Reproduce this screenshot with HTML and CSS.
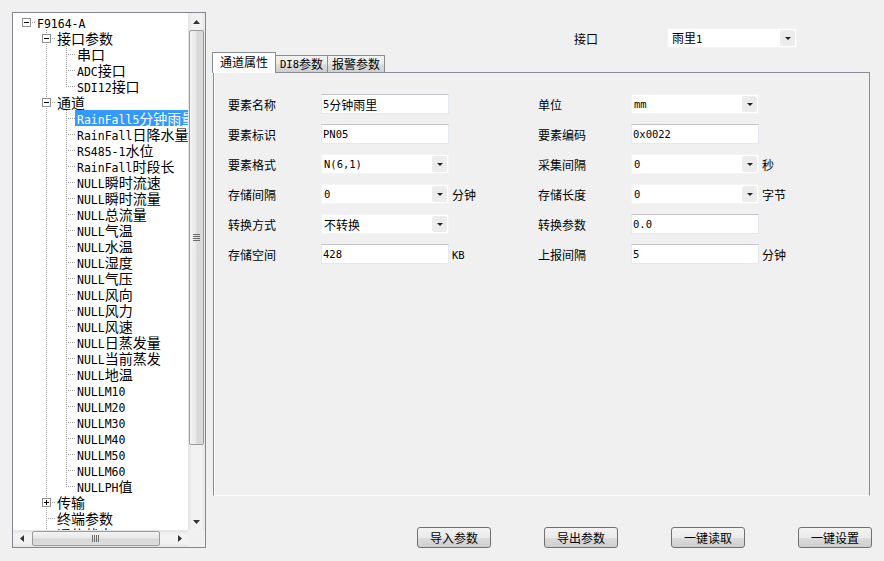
FILE: index.html
```html
<!DOCTYPE html>
<html>
<head>
    <title>F9164-A 参数设置</title>
    <meta charset="utf-8">
    <link rel="stylesheet" href="styles.css">
</head>
<body>
<div class="app">

    <aside class="tree">
        <div class="tree-body">
            <div class="tree-list">
                <div class="row"><span class="c h"><b class="box"></b></span><span class="txt"><span class="m">F9164-A</span></span></div>
                <div class="row"><span class="c"></span><span class="c t"><b class="box"></b></span><span class="txt">接口参数</span></div>
                <div class="row"><span class="c"></span><span class="c v"></span><span class="c t"></span><span class="txt">串口</span></div>
                <div class="row"><span class="c"></span><span class="c v"></span><span class="c t"></span><span class="txt"><span class="m">ADC</span>接口</span></div>
                <div class="row"><span class="c"></span><span class="c v"></span><span class="c l"></span><span class="txt"><span class="m">SDI12</span>接口</span></div>
                <div class="row"><span class="c"></span><span class="c t"><b class="box"></b></span><span class="txt">通道</span></div>
                <div class="row"><span class="c"></span><span class="c v"></span><span class="c t"></span><span class="txt sel"><span class="m">RainFall5</span>分钟雨量</span></div>
                <div class="row"><span class="c"></span><span class="c v"></span><span class="c t"></span><span class="txt"><span class="m">RainFall</span>日降水量</span></div>
                <div class="row"><span class="c"></span><span class="c v"></span><span class="c t"></span><span class="txt"><span class="m">RS485-1</span>水位</span></div>
                <div class="row"><span class="c"></span><span class="c v"></span><span class="c t"></span><span class="txt"><span class="m">RainFall</span>时段长</span></div>
                <div class="row"><span class="c"></span><span class="c v"></span><span class="c t"></span><span class="txt"><span class="m">NULL</span>瞬时流速</span></div>
                <div class="row"><span class="c"></span><span class="c v"></span><span class="c t"></span><span class="txt"><span class="m">NULL</span>瞬时流量</span></div>
                <div class="row"><span class="c"></span><span class="c v"></span><span class="c t"></span><span class="txt"><span class="m">NULL</span>总流量</span></div>
                <div class="row"><span class="c"></span><span class="c v"></span><span class="c t"></span><span class="txt"><span class="m">NULL</span>气温</span></div>
                <div class="row"><span class="c"></span><span class="c v"></span><span class="c t"></span><span class="txt"><span class="m">NULL</span>水温</span></div>
                <div class="row"><span class="c"></span><span class="c v"></span><span class="c t"></span><span class="txt"><span class="m">NULL</span>湿度</span></div>
                <div class="row"><span class="c"></span><span class="c v"></span><span class="c t"></span><span class="txt"><span class="m">NULL</span>气压</span></div>
                <div class="row"><span class="c"></span><span class="c v"></span><span class="c t"></span><span class="txt"><span class="m">NULL</span>风向</span></div>
                <div class="row"><span class="c"></span><span class="c v"></span><span class="c t"></span><span class="txt"><span class="m">NULL</span>风力</span></div>
                <div class="row"><span class="c"></span><span class="c v"></span><span class="c t"></span><span class="txt"><span class="m">NULL</span>风速</span></div>
                <div class="row"><span class="c"></span><span class="c v"></span><span class="c t"></span><span class="txt"><span class="m">NULL</span>日蒸发量</span></div>
                <div class="row"><span class="c"></span><span class="c v"></span><span class="c t"></span><span class="txt"><span class="m">NULL</span>当前蒸发</span></div>
                <div class="row"><span class="c"></span><span class="c v"></span><span class="c t"></span><span class="txt"><span class="m">NULL</span>地温</span></div>
                <div class="row"><span class="c"></span><span class="c v"></span><span class="c t"></span><span class="txt"><span class="m">NULLM10</span></span></div>
                <div class="row"><span class="c"></span><span class="c v"></span><span class="c t"></span><span class="txt"><span class="m">NULLM20</span></span></div>
                <div class="row"><span class="c"></span><span class="c v"></span><span class="c t"></span><span class="txt"><span class="m">NULLM30</span></span></div>
                <div class="row"><span class="c"></span><span class="c v"></span><span class="c t"></span><span class="txt"><span class="m">NULLM40</span></span></div>
                <div class="row"><span class="c"></span><span class="c v"></span><span class="c t"></span><span class="txt"><span class="m">NULLM50</span></span></div>
                <div class="row"><span class="c"></span><span class="c v"></span><span class="c t"></span><span class="txt"><span class="m">NULLM60</span></span></div>
                <div class="row"><span class="c"></span><span class="c v"></span><span class="c l"></span><span class="txt"><span class="m">NULLPH</span>值</span></div>
                <div class="row"><span class="c"></span><span class="c t"><b class="box plus"></b></span><span class="txt">传输</span></div>
                <div class="row"><span class="c"></span><span class="c t"></span><span class="txt">终端参数</span></div>
                <div class="row"><span class="c"></span><span class="c t"></span><span class="txt">通信状态</span></div>
            </div>
            <div class="vscroll">
                <div class="arrow"><svg width="7" height="4"><polygon points="0,4 7,4 3.5,0" fill="#333"/></svg></div>
                <div class="vthumb">
                    <svg width="7" height="8"><g fill="#6b6b6b"><rect y="0" width="7" height="1"/><rect y="2" width="7" height="1"/><rect y="4" width="7" height="1"/><rect y="6" width="7" height="1"/></g></svg>
                </div>
                <div class="track"></div>
                <div class="arrow"><svg width="7" height="4"><polygon points="0,0 7,0 3.5,4" fill="#333"/></svg></div>
            </div>
        </div>
        <div class="hbar">
            <div class="hscroll">
                <div class="arrow"><svg width="4" height="7"><polygon points="4,0 4,7 0,3.5" fill="#333"/></svg></div>
                <div class="hthumb">
                    <svg width="8" height="7"><g fill="#6b6b6b"><rect x="0" width="1" height="7"/><rect x="2" width="1" height="7"/><rect x="4" width="1" height="7"/><rect x="6" width="1" height="7"/></g></svg>
                </div>
                <div class="track"></div>
                <div class="arrow"><svg width="4" height="7"><polygon points="0,0 0,7 4,3.5" fill="#333"/></svg></div>
            </div>
            <div class="corner"></div>
        </div>
    </aside>

    <main class="main">
        <div class="port-row">
            <span class="port-label">接口</span>
            <div class="combo port-combo"><span>雨里<span class="m">1</span></span><i class="drop"></i></div>
        </div>

        <nav class="tabs">
            <span class="tab active">通道属性</span>
            <span class="tab tab-di"><span class="m">DI8</span>参数</span>
            <span class="tab tab-alarm">报警参数</span>
        </nav>

        <section class="page">
            <div class="form">
                <span class="lbl">要素名称</span>
                <div class="field"><span class="m">5</span>分钟雨里</div>
                <span class="unit"></span>
                <span class="lbl">单位</span>
                <div class="combo"><span class="m">mm</span><i class="drop"></i></div>
                <span class="unit"></span>

                <span class="lbl">要素标识</span>
                <div class="field"><span class="m">PN05</span></div>
                <span class="unit"></span>
                <span class="lbl">要素编码</span>
                <div class="field"><span class="m">0x0022</span></div>
                <span class="unit"></span>

                <span class="lbl">要素格式</span>
                <div class="combo"><span class="m">N(6,1)</span><i class="drop"></i></div>
                <span class="unit"></span>
                <span class="lbl">采集间隔</span>
                <div class="combo"><span class="m">0</span><i class="drop"></i></div>
                <span class="unit">秒</span>

                <span class="lbl">存储间隔</span>
                <div class="combo"><span class="m">0</span><i class="drop"></i></div>
                <span class="unit">分钟</span>
                <span class="lbl">存储长度</span>
                <div class="combo"><span class="m">0</span><i class="drop"></i></div>
                <span class="unit">字节</span>

                <span class="lbl">转换方式</span>
                <div class="combo"><span>不转换</span><i class="drop"></i></div>
                <span class="unit"></span>
                <span class="lbl">转换参数</span>
                <div class="field"><span class="m">0.0</span></div>
                <span class="unit"></span>

                <span class="lbl">存储空间</span>
                <div class="field"><span class="m">428</span></div>
                <span class="unit"><span class="m">KB</span></span>
                <span class="lbl">上报间隔</span>
                <div class="field"><span class="m">5</span></div>
                <span class="unit">分钟</span>
            </div>
        </section>

        <div class="actions">
            <button class="btn">导入参数</button>
            <button class="btn">导出参数</button>
            <button class="btn">一键读取</button>
            <button class="btn">一键设置</button>
        </div>
    </main>

</div>
</body>
</html>
```

FILE: styles.css
```css
body {
    margin: 0;
    background-color: #f0f0f0;
    font-family: "Noto Sans CJK SC", sans-serif;
    font-size: 12px;
    color: #000;
    overflow: hidden;
}

.app {
    display: flex;
    width: 884px;
    height: 561px;
}

.m {
    font: 10.5px/16px "DejaVu Sans Mono", "Noto Sans CJK SC", monospace;
}

/* tree */

.tree {
    margin: 12px 0 0 12px;
    width: 194px;
    height: 536px;
    box-sizing: border-box;
    border: 1px solid #828790;
    background-color: #fff;
    display: flex;
    flex-direction: column;
}

.tree-body {
    display: flex;
    height: 517px;
}

.tree-list {
    width: 175px;
    box-sizing: border-box;
    padding: 1px 0 0 3px;
    overflow: hidden;
}

.row {
    display: flex;
    height: 16px;
    white-space: nowrap;
}

.c {
    flex: none;
    width: 20px;
    height: 16px;
}

.v {
    background: repeating-linear-gradient(to bottom, #a0a0a0 0 1px, transparent 1px 2px) 10px 0 / 1px 16px no-repeat;
}

.h {
    background: repeating-linear-gradient(to right, #a0a0a0 0 1px, transparent 1px 2px) 12px 8px / 8px 1px no-repeat;
}

.t {
    background:
        repeating-linear-gradient(to right, #a0a0a0 0 1px, transparent 1px 2px) 12px 8px / 8px 1px no-repeat,
        repeating-linear-gradient(to bottom, #a0a0a0 0 1px, transparent 1px 2px) 10px 0 / 1px 16px no-repeat;
}

.l {
    background:
        repeating-linear-gradient(to right, #a0a0a0 0 1px, transparent 1px 2px) 12px 8px / 8px 1px no-repeat,
        repeating-linear-gradient(to bottom, #a0a0a0 0 1px, transparent 1px 2px) 10px 0 / 1px 9px no-repeat;
}

.box {
    display: block;
    width: 7px;
    height: 7px;
    margin: 4px 0 0 6px;
    border: 1px solid #919191;
    background: linear-gradient(#000, #000) center / 5px 1px no-repeat, #fff;
}

.box.plus {
    background:
        linear-gradient(#000, #000) center / 5px 1px no-repeat,
        linear-gradient(#000, #000) center / 1px 5px no-repeat,
        #fff;
}

.txt {
    padding: 0 2px 0 1px;
    font-size: 14px;
    line-height: 16px;
}

.txt .m {
    font-size: 11.5px;
}

.txt.sel {
    background-color: #3399ff;
    color: #fff;
    margin-left: -1px;
    padding-left: 2px;
}

/* scrollbars */

.vscroll {
    width: 17px;
    display: flex;
    flex-direction: column;
    background: linear-gradient(to right, #e3e3e3, #f2f2f2 25%, #f2f2f2 75%, #e6e6e6);
}

.arrow {
    flex: none;
    width: 17px;
    height: 17px;
    display: flex;
    align-items: center;
    justify-content: center;
}

.track {
    flex: 1;
}

.vthumb {
    height: 415px;
    margin: 0 1px;
    box-sizing: border-box;
    border: 1px solid #9b9b9b;
    border-radius: 2px;
    background: linear-gradient(to right, #f4f4f4, #e8e8e8 45%, #d8d8d8 55%, #dcdcdc);
    display: flex;
    align-items: center;
    justify-content: center;
}

.hbar {
    display: flex;
    height: 17px;
}

.hscroll {
    width: 175px;
    display: flex;
    background: linear-gradient(to bottom, #e3e3e3, #f2f2f2 25%, #f2f2f2 75%, #e6e6e6);
}

.hthumb {
    width: 128px;
    margin: 1px 0 1px 2px;
    box-sizing: border-box;
    border: 1px solid #9b9b9b;
    border-radius: 2px;
    background: linear-gradient(to bottom, #f4f4f4, #e8e8e8 45%, #d8d8d8 55%, #dcdcdc);
    display: flex;
    align-items: center;
    justify-content: center;
}

.corner {
    width: 17px;
    background-color: #f0f0f0;
}

/* right side */

.main {
    flex: 1;
    padding-top: 28px;
    display: flex;
    flex-direction: column;
}

.port-row {
    display: flex;
    align-items: center;
    height: 20px;
    padding-left: 368px;
}

.port-label {
    width: 93px;
}

.combo {
    display: flex;
    align-items: center;
    height: 20px;
    box-sizing: border-box;
    padding-left: 2px;
    background-color: #fff;
    border: 1px solid #f4f4f4;
}

.port-combo {
    width: 130px;
    padding-left: 4px;
}

.drop {
    margin-left: auto;
    margin-right: 1px;
    width: 15px;
    height: 16px;
    border-radius: 2px;
    background-color: #ececec;
    display: flex;
    align-items: center;
    justify-content: center;
}

.drop::after {
    content: "";
    border-left: 3px solid transparent;
    border-right: 3px solid transparent;
    border-top: 3px solid #222;
}

.tabs {
    display: flex;
    align-items: flex-end;
    height: 21px;
    margin: 4px 0 -1px 6px;
    position: relative;
    z-index: 1;
}

.tab {
    box-sizing: border-box;
    height: 18px;
    border: 1px solid #898c95;
    border-left: none;
    background: linear-gradient(#f2f2f2, #ebebeb 50%, #dddddd 50%, #cfcfcf);
    display: flex;
    align-items: center;
    justify-content: center;
    line-height: 16px;
}

.tab.active {
    width: 64px;
    height: 21px;
    border-left: 1px solid #898c95;
    border-bottom: none;
    background-color: #fff;
    background-image: none;
    padding-bottom: 2px;
}

.tab-di {
    width: 52px;
}

.tab-alarm {
    width: 57px;
}

.page {
    margin-left: 7px;
    width: 657px;
    height: 424px;
    box-sizing: border-box;
    border: 1px solid #898c95;
    border-bottom-color: #fafafa;
    box-shadow: inset 1px 0 #fff;
    padding: 21px 0 0 14px;
}

.form {
    display: grid;
    grid-template-columns: 93px 128px 89px 93px 128px auto;
    grid-auto-rows: 20px;
    row-gap: 10px;
    align-items: center;
}

.field {
    height: 20px;
    box-sizing: border-box;
    border: 1px solid #e3e9ef;
    border-top-color: #c2c4ca;
    background-color: #fff;
    padding-left: 1px;
    display: flex;
    align-items: center;
}

.unit {
    padding-left: 3px;
}

.actions {
    display: flex;
    justify-content: flex-end;
    gap: 53px;
    margin-top: 31px;
    padding-right: 12px;
}

.btn {
    width: 74px;
    height: 21px;
    padding: 0;
    border: 1px solid #707070;
    border-radius: 3px;
    background: linear-gradient(#f2f2f2, #ebebeb 50%, #dddddd 50%, #cfcfcf);
    font-family: "Noto Sans CJK SC", sans-serif;
    font-size: 12px;
    color: #000;
}
```
